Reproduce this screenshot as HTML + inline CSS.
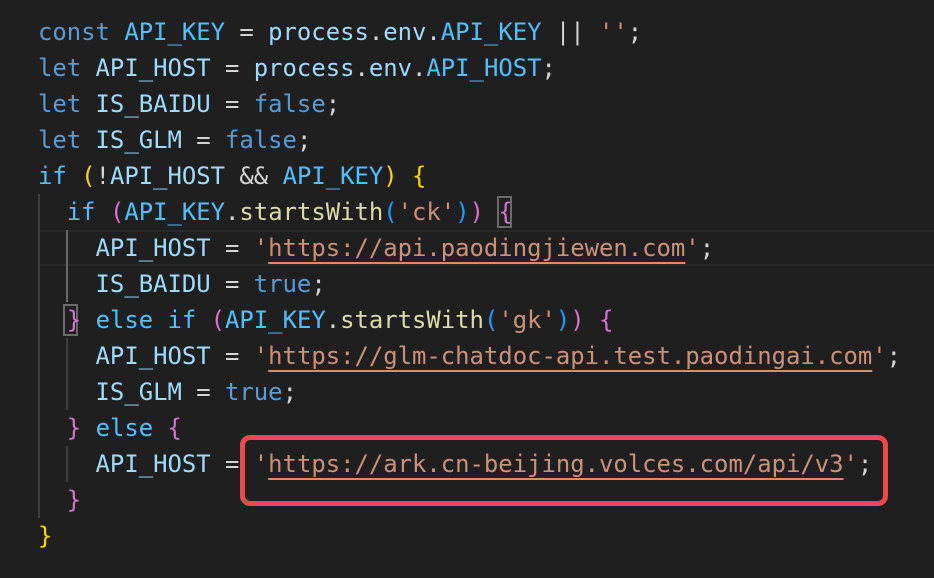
<html><head><style>
body{margin:0;width:934px;height:578px;background:#1f1f1f;overflow:hidden;position:relative}
pre{margin:0;position:absolute;left:38px;top:14px;font-family:"DejaVu Sans Mono","Liberation Mono",monospace;font-size:23.9px;line-height:36px;color:#d4d4d4}
.k{color:#569cd6}.c{color:#c586c0}.v{color:#9cdcfe}.C{color:#4fc1ff}.s{color:#ce9178}.f{color:#dcdcaa}.y{color:#ffd700}.p{color:#da70d6}.b{color:#179fff}
.u{text-decoration:underline;text-decoration-color:#ce9178;text-underline-offset:6px}
.g{position:absolute;width:2px;background:#404040}
</style></head><body>
<div style="position:absolute;left:38px;right:0;top:230px;height:36px;border-top:2px solid #2a2a2a;border-bottom:2px solid #2a2a2a;box-sizing:border-box"></div>
<div class="g" style="left:38px;top:194px;height:324px"></div>
<div class="g" style="left:66px;top:230px;height:72px;background:#6a6a6a"></div>
<div class="g" style="left:66px;top:338px;height:72px"></div>
<div class="g" style="left:66px;top:446px;height:36px"></div>
<div style="position:absolute;left:497px;top:196px;width:15px;height:32px;border:2px solid #6a6a6a;box-sizing:border-box"></div>
<div style="position:absolute;left:63px;top:304px;width:15px;height:32px;border:2px solid #6a6a6a;box-sizing:border-box"></div>
<div style="position:absolute;left:240px;top:435px;width:648px;height:71px;border:5px solid #f04848;border-radius:10px;box-sizing:border-box"></div>
<pre><span class="k">const</span> <span class="C">API_KEY</span> = <span class="v">process</span>.<span class="v">env</span>.<span class="C">API_KEY</span> || <span class="s">''</span>;
<span class="k">let</span> <span class="v">API_HOST</span> = <span class="v">process</span>.<span class="v">env</span>.<span class="C">API_HOST</span>;
<span class="k">let</span> <span class="v">IS_BAIDU</span> = <span class="k">false</span>;
<span class="k">let</span> <span class="v">IS_GLM</span> = <span class="k">false</span>;
<span class="c">if</span> <span class="y">(</span>!<span class="v">API_HOST</span> &amp;&amp; <span class="C">API_KEY</span><span class="y">)</span> <span class="y">{</span>
  <span class="c">if</span> <span class="p">(</span><span class="C">API_KEY</span>.<span class="f">startsWith</span><span class="b">(</span><span class="s">'ck'</span><span class="b">)</span><span class="p">)</span> <span class="p">{</span>
    <span class="v">API_HOST</span> = <span class="s">'<span class="u">https://api.paodingjiewen.com</span>'</span>;
    <span class="v">IS_BAIDU</span> = <span class="k">true</span>;
  <span class="p">}</span> <span class="c">else if</span> <span class="p">(</span><span class="C">API_KEY</span>.<span class="f">startsWith</span><span class="b">(</span><span class="s">'gk'</span><span class="b">)</span><span class="p">)</span> <span class="p">{</span>
    <span class="v">API_HOST</span> = <span class="s">'<span class="u">https://glm-chatdoc-api.test.paodingai.com</span>'</span>;
    <span class="v">IS_GLM</span> = <span class="k">true</span>;
  <span class="p">}</span> <span class="c">else</span> <span class="p">{</span>
    <span class="v">API_HOST</span> = <span class="s">'<span class="u">https://ark.cn-beijing.volces.com/api/v3</span>'</span>;
  <span class="p">}</span>
<span class="y">}</span></pre>
</body></html>
